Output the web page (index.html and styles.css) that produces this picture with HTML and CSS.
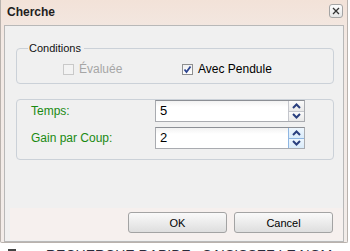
FILE: index.html
```html
<!DOCTYPE html>
<html>
<head>
    <title>Cherche</title>
    <link rel="stylesheet" href="styles.css">
</head>
<body>
    <div class="dialog">
        <div class="titlebar">
            <span class="title">Cherche</span>
            <span class="close-btn">
                <svg width="12" height="12" viewBox="0 0 12 12">
                    <path d="M3 3 L9 9 M9 3 L3 9" stroke="#333" stroke-width="1.3" fill="none"/>
                </svg>
            </span>
        </div>

        <div class="client">
            <div class="content">
                <fieldset class="conditions">
                    <legend>Conditions</legend>
                    <div class="check-row">
                        <label class="check disabled"><span class="box"></span>Évaluée</label>
                        <label class="check">
                            <span class="box checked">
                                <svg width="9" height="9" viewBox="0 0 9 9">
                                    <path d="M1.5 4.5 L3.5 7 L7.5 1.5" stroke="#2d4590" stroke-width="1.8" fill="none"/>
                                </svg>
                            </span>Avec Pendule
                        </label>
                    </div>
                </fieldset>

                <div class="params">
                    <div class="param-row">
                        <span class="param-label">Temps:</span>
                        <div class="spin">
                            <span class="spin-value">5</span>
                            <div class="spin-buttons">
                                <span class="spin-btn"><svg width="9" height="6" viewBox="0 0 9 6"><path d="M1 5 L4.5 1.5 L8 5" stroke="#2a3f7e" stroke-width="2" fill="none"/></svg></span>
                                <span class="spin-btn"><svg width="9" height="6" viewBox="0 0 9 6"><path d="M1 1 L4.5 4.5 L8 1" stroke="#2a3f7e" stroke-width="2" fill="none"/></svg></span>
                            </div>
                        </div>
                    </div>
                    <div class="param-row">
                        <span class="param-label">Gain par Coup:</span>
                        <div class="spin">
                            <span class="spin-value">2</span>
                            <div class="spin-buttons hover">
                                <span class="spin-btn"><svg width="9" height="6" viewBox="0 0 9 6"><path d="M1 5 L4.5 1.5 L8 5" stroke="#2a3f7e" stroke-width="2" fill="none"/></svg></span>
                                <span class="spin-btn"><svg width="9" height="6" viewBox="0 0 9 6"><path d="M1 1 L4.5 4.5 L8 1" stroke="#2a3f7e" stroke-width="2" fill="none"/></svg></span>
                            </div>
                        </div>
                    </div>
                </div>
            </div>

            <div class="footer">
                <button class="btn">OK</button>
                <button class="btn">Cancel</button>
            </div>
        </div>
    </div>

    <div class="behind">
        <span class="behind-icon"></span>
        <span>RECHERCHE RAPIDE : SAISISSEZ LE NOM</span>
    </div>
</body>
</html>
```

FILE: styles.css
```css
body {
    margin: 0;
    background: #ffffff;
    font-family: "Liberation Sans", Arial, sans-serif;
    font-size: 12px;
    color: #000;
    overflow: hidden;
}
.dialog {
    box-sizing: border-box;
    width: 348px;
    height: 243px;
    padding: 0 3px 1px 3px;
    border: 1px solid #b9b2ad;
    border-top: none;
    border-radius: 0 0 2px 2px;
    background: linear-gradient(#f2e2d8, #f3e9e4 40px, #f2ece9);
}
.titlebar {
    display: flex;
    align-items: center;
    justify-content: space-between;
    height: 25px;
    padding: 0 1px 0 3px;
}
.title {
    font-weight: bold;
    font-size: 12px;
    color: #1e1e1e;
    margin-top: -1px;
}
.close-btn {
    box-sizing: border-box;
    width: 14px;
    height: 14px;
    margin-top: -3px;
    display: flex;
    align-items: center;
    justify-content: center;
    border: 1px solid #a4a4a4;
    border-radius: 3px;
    background: linear-gradient(#fdfdfd, #e6e6e6);
}
.client {
    box-sizing: border-box;
    height: 217px;
    display: flex;
    flex-direction: column;
    border: 1px solid #b8b8b8;
    background: #f0f0f0;
}
.content {
    padding: 16px 9px 0 11px;
}
.conditions {
    margin: 0;
    padding: 7px 0 7px 0;
    border: 1px solid #cbd1d8;
    border-radius: 4px;
}
.conditions legend {
    font-size: 11px;
    line-height: 13px;
    padding: 0 3px 0 1px;
    margin-left: 11px;
    color: #111;
}
.check-row {
    display: grid;
    grid-template-columns: 119px auto;
    height: 14px;
    padding-left: 46px;
    align-items: center;
}
.check {
    display: flex;
    align-items: center;
    line-height: 14px;
}
.check.disabled {
    color: #a6a6a6;
}
.box {
    box-sizing: border-box;
    width: 11px;
    height: 11px;
    margin-right: 5px;
    border: 1px solid #8e8f8f;
    background: linear-gradient(#f0f0f0, #ffffff);
    display: flex;
    align-items: center;
    justify-content: center;
}
.check.disabled .box {
    border-color: #c9c9c9;
    background: #f3f3f3;
}
.params {
    margin-top: 15px;
    padding: 0 0 10px 14px;
    border: 1px solid #cbd1d8;
    border-radius: 4px;
    display: flex;
    flex-direction: column;
    gap: 5px;
}
.param-row {
    display: grid;
    grid-template-columns: 124px 150px;
    align-items: center;
    height: 22px;
}
.param-label {
    color: #1a8a12;
}
.spin {
    box-sizing: border-box;
    height: 22px;
    display: flex;
    border: 1px solid #a9abb0;
    border-top-color: #8c8f95;
    background: linear-gradient(#f2f2f2, #ffffff 6px);
}
.spin-value {
    flex: 1;
    padding-left: 4px;
    line-height: 20px;
    font-size: 13px;
}
.spin-buttons {
    width: 16px;
    display: flex;
    flex-direction: column;
}
.spin-btn {
    flex: 1;
    display: flex;
    align-items: center;
    justify-content: center;
    border-left: 1px solid #c4c6cc;
    background: linear-gradient(#fbfbfb, #e9e9e9);
}
.spin-btn + .spin-btn {
    border-top: 1px solid #c4c6cc;
}
.spin-buttons.hover .spin-btn {
    border-color: #8fb6e2;
    background: linear-gradient(#eef6fd, #d9ebfa);
}
.footer {
    margin: auto 0 1px 5px;
    height: 32px;
    box-sizing: border-box;
    padding: 4px 10px 0 0;
    background: #f6f0ee;
    display: flex;
    justify-content: flex-end;
    align-items: flex-start;
    gap: 7px;
}
.btn {
    width: 99px;
    height: 21px;
    padding: 0;
    font-family: "Liberation Sans", Arial, sans-serif;
    font-size: 11px;
    color: #000;
    border: 1px solid #a3a3a3;
    border-radius: 3px;
    background: linear-gradient(#fafafa, #ececec 50%, #dedede);
}
.behind {
    display: flex;
    align-items: flex-start;
    gap: 30px;
    padding: 4px 0 0 8px;
    font-size: 14px;
    line-height: 16px;
    color: #2a2a3a;
    white-space: nowrap;
}
.behind-icon {
    width: 8px;
    height: 8px;
    margin-top: 2px;
    background: #444;
}
```
